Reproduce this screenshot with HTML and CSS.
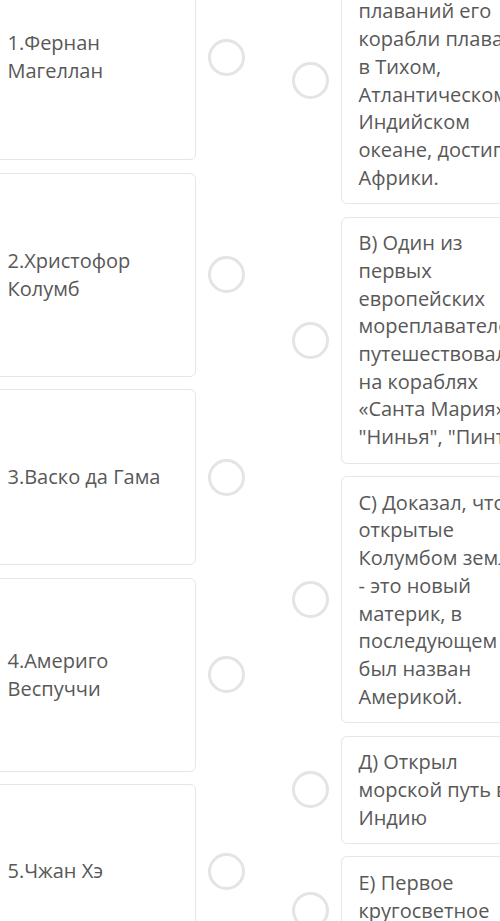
FILE: index.html
```html
<!DOCTYPE html>
<html lang="ru">
<head>
<meta charset="utf-8">
<title>Сопоставление</title>
<link rel="stylesheet" href="styles.css">
</head>
<body>
<div class="board">
  <div class="col col-left">
    <div class="row">
      <div class="card card-left h1">1.Фернан<br>Магеллан</div>
      <span class="dot"></span>
    </div>
    <div class="row">
      <div class="card card-left h2">2.Христофор<br>Колумб</div>
      <span class="dot"></span>
    </div>
    <div class="row">
      <div class="card card-left h3">3.Васко да Гама</div>
      <span class="dot"></span>
    </div>
    <div class="row">
      <div class="card card-left h4">4.Америго<br>Веспуччи</div>
      <span class="dot"></span>
    </div>
    <div class="row">
      <div class="card card-left h5">5.Чжан Хэ</div>
      <span class="dot"></span>
    </div>
  </div>
  <div class="col col-right">
    <div class="row">
      <span class="dot"></span>
      <div class="card card-right">А) Во время своих<br>плаваний его<br>корабли плавали<br>в Тихом,<br>Атлантическом и<br>Индийском<br>океане, достиг<br>Африки.</div>
    </div>
    <div class="row">
      <span class="dot"></span>
      <div class="card card-right">В) Один из<br>первых<br>европейских<br>мореплавателей,<br>путешествовал<br>на кораблях<br>«Санта Мария»,<br>"Нинья", "Пинта"</div>
    </div>
    <div class="row">
      <span class="dot"></span>
      <div class="card card-right">С) Доказал, что<br>открытые<br>Колумбом земли<br>- это новый<br>материк, в<br>последующем<br>был назван<br>Америкой.</div>
    </div>
    <div class="row">
      <span class="dot"></span>
      <div class="card card-right">Д) Открыл<br>морской путь в<br>Индию</div>
    </div>
    <div class="row">
      <span class="dot"></span>
      <div class="card card-right">Е) Первое<br>кругосветное<br>плавание</div>
    </div>
  </div>
</div>
</body>
</html>
```

FILE: styles.css
```css
html, body {
  margin: 0;
  padding: 0;
  overflow: hidden;
  background: #ffffff;
}

body {
  width: 500px;
  height: 921px;
  font-family: "Open Sans", "Noto Sans", sans-serif;
  font-size: 20px;
  line-height: 27.7px;
  color: #585858;
}

.board {
  display: flex;
  align-items: flex-start;
  margin-left: -10px;
}

.col {
  display: flex;
  flex-direction: column;
}

.col-left {
  margin-top: -46px;
  gap: 12.5px;
}

.col-right {
  margin-top: -43px;
  margin-left: 47px;
  gap: 12.5px;
}

.row {
  display: flex;
  align-items: center;
  gap: 12px;
}

.card {
  box-sizing: border-box;
  background: #ffffff;
  border: 1.5px solid #e6e6e6;
  border-radius: 6px;
  white-space: nowrap;
  overflow: hidden;
}

.card-left {
  width: 206px;
  padding: 0 16px 0 16.5px;
  display: flex;
  align-items: center;
}

.h1 { height: 206px; }
.h2 { height: 204px; }
.h3 { height: 176px; }
.h4 { height: 194px; }
.h5 { height: 174px; }

.card-right {
  width: 200px;
  padding: 11.7px 16px 11.7px 16.5px;
}

.dot {
  flex: none;
  box-sizing: border-box;
  width: 37px;
  height: 37px;
  border: 3px solid #e4e4e4;
  border-radius: 50%;
  background: #ffffff;
}
```
